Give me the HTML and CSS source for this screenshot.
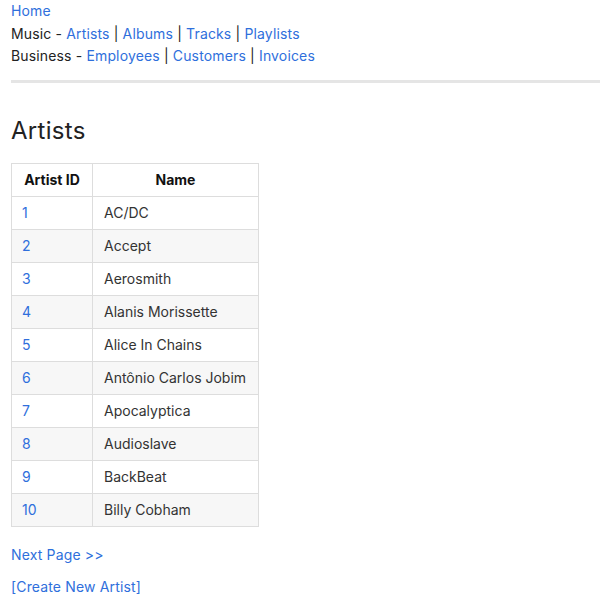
FILE: index.html
```html
<!DOCTYPE html>
<html>
<head>
<meta charset="utf-8">
<link rel="stylesheet" href="styles.css">
</head>
<body>
<nav class="nav">
  <div class="nav-line"><a href="#">Home</a></div>
  <div class="nav-line">Music - <a href="#">Artists</a> | <a href="#">Albums</a> | <a href="#">Tracks</a> | <a href="#">Playlists</a></div>
  <div class="nav-line">Business - <a href="#">Employees</a> | <a href="#">Customers</a> | <a href="#">Invoices</a></div>
</nav>
<div class="rule"></div>
<h1 class="title">Artists</h1>
<table class="grid">
  <thead>
    <tr><th class="c-id">Artist ID</th><th class="c-name">Name</th></tr>
  </thead>
  <tbody>
    <tr><td><a href="#">1</a></td><td>AC/DC</td></tr>
    <tr><td><a href="#">2</a></td><td>Accept</td></tr>
    <tr><td><a href="#">3</a></td><td>Aerosmith</td></tr>
    <tr><td><a href="#">4</a></td><td>Alanis Morissette</td></tr>
    <tr><td><a href="#">5</a></td><td>Alice In Chains</td></tr>
    <tr><td><a href="#">6</a></td><td>Antônio Carlos Jobim</td></tr>
    <tr><td><a href="#">7</a></td><td>Apocalyptica</td></tr>
    <tr><td><a href="#">8</a></td><td>Audioslave</td></tr>
    <tr><td><a href="#">9</a></td><td>BackBeat</td></tr>
    <tr><td><a href="#">10</a></td><td>Billy Cobham</td></tr>
  </tbody>
</table>
<p class="pager"><a href="#">Next Page &gt;&gt;</a></p>
<p class="create"><a href="#">[Create New Artist]</a></p>
</body>
</html>
```
FILE: styles.css
```css
html, body {
  margin: 0;
  padding: 0;
  background: #fff;
}
body {
  font-family: Inter, "Noto Sans", sans-serif;
  font-size: 14px;
  letter-spacing: 0.15px;
  color: #222;
  padding: 0 0 0 11px;
}
a {
  color: #2f6fdc;
  text-decoration: none;
}
.nav-line {
  line-height: 22.5px;
}
.rule {
  margin-top: 12px;
  height: 3px;
  background: #e5e5e5;
}
.title {
  font-size: 24px;
  font-weight: 400;
  letter-spacing: 0.3px;
  margin: 33px 0 17px;
  line-height: 30px;
}
.grid {
  border-collapse: collapse;
  width: 248px;
  border: 1px solid #ddd;
  letter-spacing: 0;
  white-space: nowrap;
  color: #333;
}
.grid th, .grid td {
  border: 1px solid #ddd;
  height: 31px;
  padding: 0 11px 1px;
  text-align: left;
}
.grid th {
  text-align: center;
  font-weight: 700;
  color: #111;
}
.grid .c-id {
  width: 58px;
}
.grid td:first-child {
  padding-left: 10px;
}
.grid tbody tr:nth-child(even) td {
  background: #f7f7f7;
}
.pager {
  margin: 18px 0 0;
  line-height: 20px;
}
.create {
  margin: 12px 0 0;
  line-height: 20px;
}
```
